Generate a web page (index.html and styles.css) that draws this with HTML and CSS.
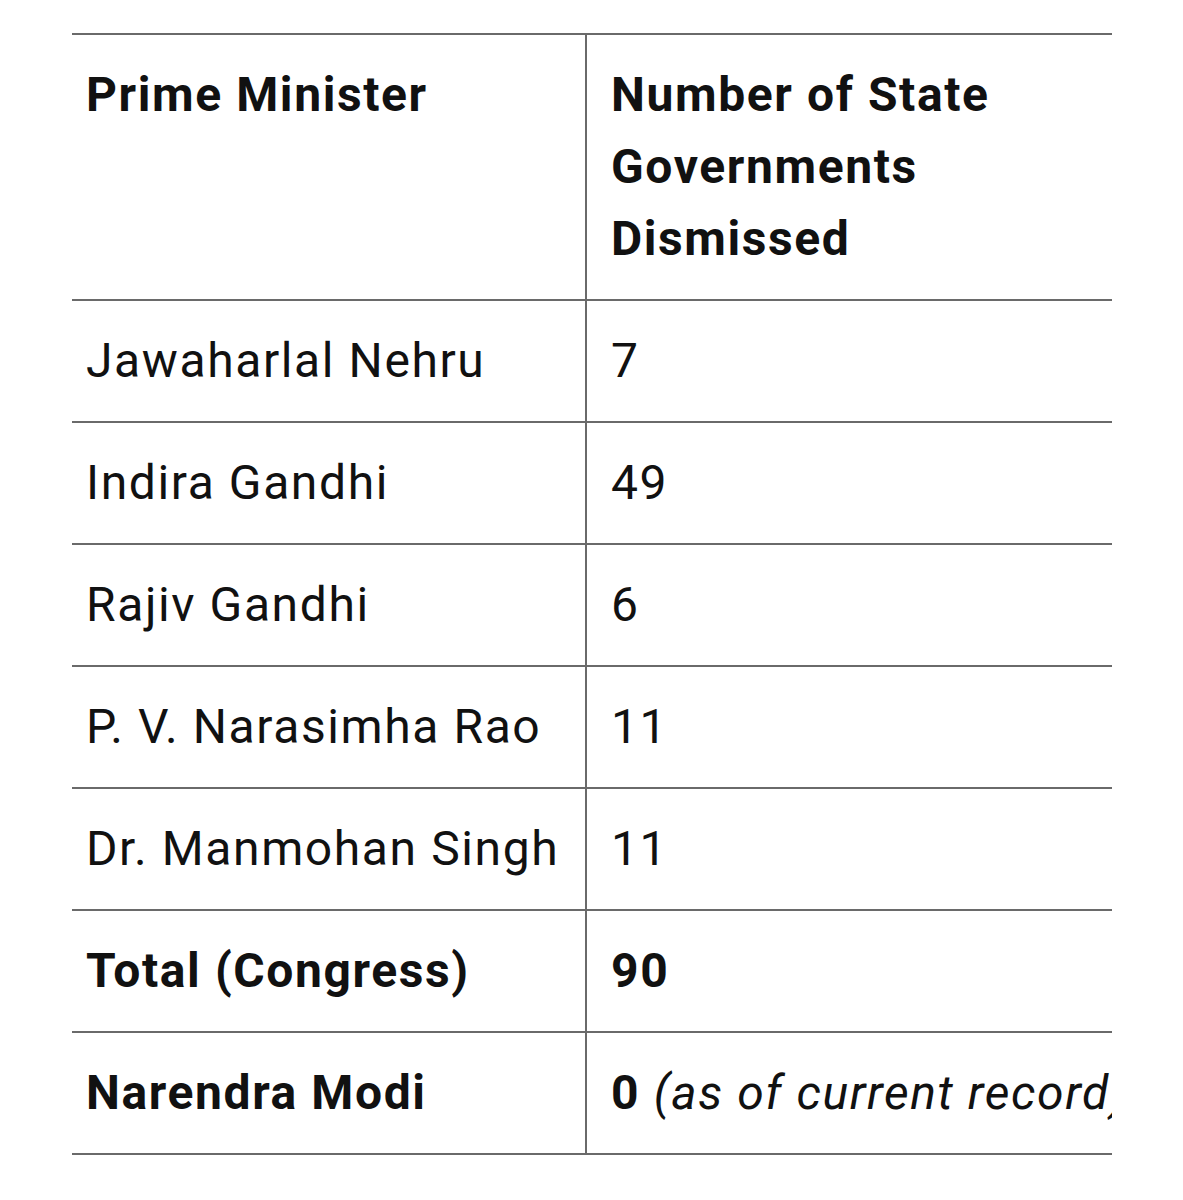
FILE: index.html
```html
<!DOCTYPE html>
<html>
<head>
<meta charset="utf-8">
<link rel="stylesheet" href="styles.css">
</head>
<body>
<div class="wrap">
  <div class="tbl">
    <div class="row head">
      <div class="c1">Prime Minister</div>
      <div class="c2">Number of State<br>Governments<br>Dismissed</div>
    </div>
    <div class="row">
      <div class="c1">Jawaharlal Nehru</div>
      <div class="c2">7</div>
    </div>
    <div class="row">
      <div class="c1">Indira Gandhi</div>
      <div class="c2">49</div>
    </div>
    <div class="row">
      <div class="c1">Rajiv Gandhi</div>
      <div class="c2">6</div>
    </div>
    <div class="row">
      <div class="c1">P. V. Narasimha Rao</div>
      <div class="c2">11</div>
    </div>
    <div class="row">
      <div class="c1">Dr. Manmohan Singh</div>
      <div class="c2">11</div>
    </div>
    <div class="row strong">
      <div class="c1">Total (Congress)</div>
      <div class="c2">90</div>
    </div>
    <div class="row last">
      <div class="c1 b">Narendra Modi</div>
      <div class="c2"><span class="b">0</span> <em>(as of current record)</em></div>
    </div>
  </div>
</div>
</body>
</html>
```
FILE: styles.css
```css
html, body {
  margin: 0;
  padding: 0;
  background: #fff;
}
body {
  font-family: Roboto, "Liberation Sans", sans-serif;
  color: #111;
}
.wrap {
  margin: 33px 0 0 72px;
  width: 1040px;
  overflow: hidden;
}
.tbl {
  display: flex;
  flex-direction: column;
}
.row {
  display: flex;
  border-top: 2px solid #6a6a6a;
  font-size: 48px;
  line-height: 72px;
  letter-spacing: 1.6px;
}
.row.last {
  border-bottom: 2px solid #6a6a6a;
}
.c1 {
  width: 499px;
  flex: none;
  padding: 24px 0 24px 14px;
}
.c2 {
  flex: 1;
  padding: 24px 0 24px 24px;
  border-left: 2px solid #6a6a6a;
  white-space: nowrap;
}
.head, .strong, .b {
  font-weight: 700;
}
em {
  font-style: italic;
}
```
